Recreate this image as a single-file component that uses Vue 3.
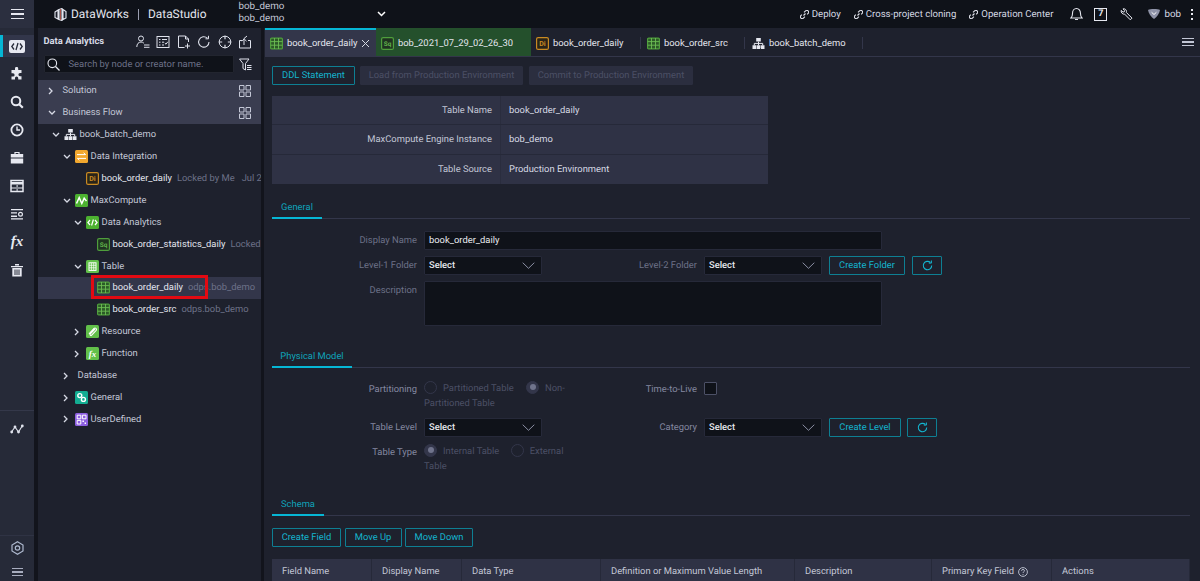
<script setup>
const G = '#4f9e3c'
const icons = {
  di: `<rect x=".6" y=".6" width="11.8" height="11.8" rx="1.5" fill="#2a2418" stroke="#c98a22" stroke-width="1.2"/><text x="6.5" y="9" font-size="7" font-family="Roboto" font-weight="700" text-anchor="middle" fill="#c98a22">Di</text>`,
  sq: `<rect x=".6" y=".6" width="11.8" height="11.8" rx="1.5" fill="#1f3320" stroke="${G}" stroke-width="1.2"/><text x="6.5" y="9" font-size="6.5" font-family="Roboto" font-weight="700" text-anchor="middle" fill="#5fb04a">Sq</text>`,
  table: `<rect x=".6" y="1.1" width="11.8" height="10.8" rx="1" fill="#2c5a28" stroke="${G}" stroke-width="1.2"/><path d="M.6 4.6h11.8M.6 8.2h11.8M4.5 1v11M8.5 1v11" stroke="#6cbc54" stroke-width=".9"/>`,
  flow: `<path d="M4.2 1h4.6v3.6H4.2zM.5 8.3h3.7v3.7H.5zM4.7 8.3h3.6v3.7H4.7zM8.8 8.3h3.7v3.7H8.8z" fill="#e6e8f0"/><path d="M6.5 4.6v3.7M2.3 8.3V6.4h8.4v1.9" stroke="#e6e8f0" fill="none"/>`,
  integ: `<rect width="13" height="13" rx="1.5" fill="#f2a72e"/><path d="M2 4.6h8.6L8.6 2.8M11 8.4H2.4l2 1.8" stroke="#fff" fill="none" stroke-width="1"/>`,
  max: `<rect width="13" height="13" rx="1.5" fill="#4cb130"/><path d="M1.5 9.5 4.2 3.5l2.6 6 2.4-5.4 2.3 3" stroke="#fff" fill="none" stroke-width="1.5"/>`,
  code: `<rect width="13" height="13" rx="1.5" fill="#4cb130"/><path d="M4 4 1.9 6.5 4 9M9 4l2.1 2.5L9 9M7.4 3.5 5.6 9.5" stroke="#fff" fill="none" stroke-width="1.2"/>`,
  tbl: `<rect width="13" height="13" rx="1.5" fill="#62c04a"/><rect x="3" y="2.8" width="7" height="7.6" fill="none" stroke="#fff"/><path d="M3 5.3h7M3 7.8h7M5.4 3v7M7.7 3v7" stroke="#fff" stroke-width=".7"/>`,
  res: `<rect width="13" height="13" rx="1.5" fill="#62c04a"/><path d="M3 9.2 8 3.8a1.5 1.5 0 0 1 2.2 2L5.7 10.6a.9.9 0 0 1-1.4-1.3L9 4.4" stroke="#fff" fill="none" stroke-width="1.1" transform="translate(0 -.4)"/>`,
  fn: `<rect width="13" height="13" rx="1.5" fill="#62c04a"/><text x="6.5" y="9.8" font-size="9" font-family="Liberation Serif" font-style="italic" font-weight="700" text-anchor="middle" fill="#fff">fx</text>`,
  gen: `<rect width="13" height="13" rx="1.5" fill="#13ad92"/><circle cx="4.8" cy="4.6" r="2" fill="none" stroke="#fff" stroke-width="1.4"/><circle cx="8.4" cy="8.4" r="2" fill="none" stroke="#fff" stroke-width="1.4"/>`,
  user: `<rect width="13" height="13" rx="1.5" fill="#8d5fe0"/><path d="M2.2 2.2h3.6v3.6H2.2zM2.2 7.4h3.6V11H2.2zM7.4 2.2H11v3.6H7.4z" fill="none" stroke="#fff"/><path d="M7.4 7.4h1.6V9H7.4zM9.6 9.4H11V11H9.6z" fill="#fff"/>`
}

const railTop = [
  { k: 'puzzle', d: `<path d="M5 1.5a1.6 1.6 0 0 1 3.2 0V3h3.3v3H10a1.6 1.6 0 0 0 0 3.2h1.5v3.3h-3.3V11a1.6 1.6 0 0 0-3.2 0v1.5H1.5V9.5H3a1.6 1.6 0 0 0 0-3.2H1.5V3H5z" fill="#e7e9f1"/>` },
  { k: 'search', d: `<circle cx="6" cy="6" r="4.3" fill="none" stroke="#e7e9f1" stroke-width="2"/><path d="m9.2 9.2 3.6 3.6" stroke="#e7e9f1" stroke-width="2.2"/>` },
  { k: 'clock', d: `<circle cx="7" cy="7" r="5.6" fill="none" stroke="#e7e9f1" stroke-width="1.8"/><path d="M7 3.6V7h3" fill="none" stroke="#e7e9f1" stroke-width="1.4"/>` },
  { k: 'case', d: `<path d="M5 3V1.5h4V3" fill="none" stroke="#e7e9f1" stroke-width="1.2"/><path d="M.8 3h12.4v3.6H.8zM.8 7.6h12.4V12.6H.8z" fill="#e7e9f1"/>` },
  { k: 'tbl', d: `<rect x="1" y="1.5" width="12" height="11" fill="none" stroke="#e7e9f1" stroke-width="1.5"/><path d="M1 3h12v2.400H1zM1 8.600h12v1H1zM6.600 5v7.400h1V5z" fill="#e7e9f1"/>` },
  { k: 'list', d: `<path d="M1 2h12v1.300H1zM1 5.300h6v1.300H1zM1 8.600h6v1.300H1zM1 11.300h12v1.300H1z" fill="#e7e9f1"/><circle cx="10.500" cy="7.300" r="1.900" fill="none" stroke="#e7e9f1" stroke-width="1.200"/>` },
  { k: 'trash', d: `<path d="M1 3h12v1.200H1zM5 1h4v1.500H5z" fill="#e7e9f1"/><path d="M2.300 5h9.400v8.500H2.300z" fill="#e7e9f1"/><path d="M5 6.500v5.500M7 6.500v5.500M9 6.500v5.500" stroke="#262a38" stroke-width="1"/>` }
]
const railA = railTop.slice(0, 6)
const railB = railTop.slice(6)

const tree = [
  { t: 'Solution', lv: 0, c: 'r', sec: 1 },
  { t: 'Business Flow', lv: 0, c: 'd', sec: 1 },
  { t: 'book_batch_demo', lv: 1, c: 'd', i: 'flow' },
  { t: 'Data Integration', lv: 2, c: 'd', i: 'integ' },
  { t: 'book_order_daily', lv: 3, i: 'di', strong: 1, meta: 'Locked by Me', date: 'Jul 29' },
  { t: 'MaxCompute', lv: 2, c: 'd', i: 'max' },
  { t: 'Data Analytics', lv: 3, c: 'd', i: 'code' },
  { t: 'book_order_statistics_daily', lv: 4, i: 'sq', strong: 1, meta: 'Locked' },
  { t: 'Table', lv: 3, c: 'd', i: 'tbl' },
  { t: 'book_order_daily', lv: 4, i: 'table', strong: 1, meta: 'odps.bob_demo', sel: 1 },
  { t: 'book_order_src', lv: 4, i: 'table', strong: 1, meta: 'odps.bob_demo' },
  { t: 'Resource', lv: 3, c: 'r', i: 'res' },
  { t: 'Function', lv: 3, c: 'r', i: 'fn' },
  { t: 'Database', lv: 2, c: 'r' },
  { t: 'General', lv: 2, c: 'r', i: 'gen' },
  { t: 'UserDefined', lv: 2, c: 'r', i: 'user' }
]
const pad = (lv) => (lv === 0 ? 10 : 14 + (lv - 1) * 11)

const tabs = [
  { t: 'book_order_daily', i: 'table', cls: 'active', close: 1 },
  { t: 'bob_2021_07_29_02_26_30', i: 'sq', cls: 'green' },
  { t: 'book_order_daily', i: 'di', cls: 'sep t3' },
  { t: 'book_order_src', i: 'table', cls: 'sep t4' },
  { t: 'book_batch_demo', i: 'flow', cls: 'sep t5' }
]

const info = [
  ['Table Name', 'book_order_daily'],
  ['MaxCompute Engine Instance', 'bob_demo'],
  ['Table Source', 'Production Environment']
]
const cols = [
  ['Field Name', 100], ['Display Name', 90], ['Data Type', 139],
  ['Definition or Maximum Value Length', 194], ['Description', 137],
  ['Primary Key Field', 120], ['Actions', 138]
]
const links = ['Deploy', 'Cross-project cloning', 'Operation Center']
const topIcons = [
  `<circle cx="5" cy="3.500" r="2.500" fill="none" stroke="#dfe2ec" stroke-width="1"/><path d="M.8 12c0-3 1.700-5 4.200-5 1.200 0 2.200.4 2.900 1.200" fill="none" stroke="#dfe2ec"/><path d="M8 10h5.500M8 12.300h5.500" stroke="#dfe2ec"/>`,
  `<rect x="1" y="1.500" width="12" height="11" fill="none" stroke="#dfe2ec"/><path d="M3 4.500h1.500M6 4.500h5M3 7.200h1.500M6 7.200h2M3 10h1.500M6 10h2M8.800 8l1.200 1.200 1.800-2.400" stroke="#dfe2ec" fill="none"/>`,
  `<path d="M7.500 12.500H1.500V1h7l3 3v3" fill="none" stroke="#dfe2ec"/><path d="M8.500 1v3h3M10.500 8.500v5M8 11h5" fill="none" stroke="#dfe2ec"/>`,
  `<path d="M12 7a5.200 5.200 0 1 1-1.600-3.800" fill="none" stroke="#dfe2ec" stroke-width="1.100"/><path d="M11.500.8v3h-3" fill="none" stroke="#dfe2ec"/>`,
  `<circle cx="7" cy="7" r="5.800" fill="none" stroke="#dfe2ec"/><path d="M7 .8v3.400M7 9.800v3.400M.8 7h3.400M9.800 7h3.400" stroke="#dfe2ec" stroke-width="1.200"/>`,
  `<path d="M4 5.500H1.500v7.500h11V5.500H10" fill="none" stroke="#dfe2ec"/><path d="M9 1 6 3.500V10M6 4 4 6.200M6.300 4 8.500 6.200" fill="none" stroke="#dfe2ec"/>`
]
</script>

<template>
  <div class="app">
    <aside class="rail">
      <div class="burger"><span></span><span></span><span></span></div>
      <div class="rail-active">
        <svg width="16" height="13" viewBox="0 0 16 13"><rect width="16" height="13" rx="2" fill="#e7e9f1"/><path d="M5 3.500 2.800 6.500 5 9.500M11 3.500l2.200 3L11 9.500M9 3l-2 7" fill="none" stroke="#262a38" stroke-width="1.300"/></svg>
      </div>
      <div class="rail-list">
        <div v-for="r in railA" :key="r.k" class="rail-item">
          <svg width="14" height="14" viewBox="0 0 14 14" v-html="r.d"></svg>
        </div>
        <div class="rail-item fx">fx</div>
        <div v-for="r in railB" :key="r.k" class="rail-item">
          <svg width="14" height="14" viewBox="0 0 14 14" v-html="r.d"></svg>
        </div>
      </div>
      <div class="rail-div"></div>
      <div class="rail-graph">
        <svg width="14" height="12" viewBox="0 0 14 12"><path d="M1.500 9 5 4l3.500 5L12.500 2.500" fill="none" stroke="#dfe2ec" stroke-width="1.100"/><circle cx="1.700" cy="9" r="1.400" fill="#dfe2ec"/><circle cx="5" cy="4" r="1.400" fill="#dfe2ec"/><circle cx="8.500" cy="9" r="1.400" fill="#dfe2ec"/><circle cx="12.300" cy="3" r="1.400" fill="#dfe2ec"/></svg>
      </div>
      <div class="rail-spacer"></div>
      <div class="rail-div2"></div>
      <div class="rail-gear">
        <svg width="13" height="14" viewBox="0 0 13 14"><path d="M6.500.8 12 4v6l-5.500 3.200L1 10V4z" fill="none" stroke="#aeb9cf" stroke-width="1.200"/><circle cx="6.500" cy="7" r="2.200" fill="none" stroke="#aeb9cf" stroke-width="1.200"/></svg>
      </div>
      <div class="burger small"><span></span><span></span><span></span></div>
    </aside>

    <div class="right">
      <header class="top">
        <svg class="logo" width="13" height="13" viewBox="0 0 13 13"><path d="M1 4 4 2v9L1 9.500zM5 1.500l3-1v12l-3-1zM9 1.500l3 2V10l-3 1.500z" fill="#1c1f2a" stroke="#e3e5ee" stroke-width="1.100"/><path d="M6.500 1v11" stroke="#c95a4a" stroke-width=".8"/></svg>
        <span class="brand">DataWorks</span>
        <span class="bar"></span>
        <span class="brand">DataStudio</span>
        <div class="proj"><div>bob_demo</div><div>bob_demo</div></div>
        <svg class="proj-chev" width="9" height="6" viewBox="0 0 9 6"><path d="m1 1 3.500 3.500L8 1" fill="none" stroke="#fff" stroke-width="1.500"/></svg>
        <div class="grow"></div>
        <a v-for="l in links" :key="l" class="link">
          <svg width="9" height="9" viewBox="0 0 9 9"><path d="M3.500 5.500 5.500 3.500M1.800 4.700.9 5.600a1.700 1.700 0 0 0 2.500 2.500l1.500-1.500M4 2.400l1.600-1.500A1.700 1.700 0 0 1 8.100 3.400L7.200 4.300" fill="none" stroke="#e3e5ee" stroke-width="1.100"/></svg>
          {{ l }}
        </a>
        <svg class="ti bell" width="13" height="14" viewBox="0 0 13 14"><path d="M1 11h11c-1.200-1-1.500-2-1.500-4.500 0-3-1.700-5-4-5s-4 2-4 5C2.500 9 2.200 10 1 11zM5 12.500h3" fill="none" stroke="#e6e8f0" stroke-width="1.100"/></svg>
        <div class="help">7</div>
        <svg class="ti wrench" width="13" height="13" viewBox="0 0 13 13"><path d="M1.200 2.400 3 4.100l1.300-.3.300-1.300L3 .9c1.600-.5 3.500.7 3.500 2.500 0 .4 0 .8-.2 1l5.700 5.700-1.700 1.700-5.700-5.700C2.800 6.600.6 4.600 1.200 2.400z" fill="none" stroke="#e6e8f0" stroke-width="1"/></svg>
        <svg class="ti shield" width="12" height="10" viewBox="0 0 12 10"><path d="M0 1c2-1.300 10-1.300 12 0-.5 3.500-3 7-6 9C3 8 .5 4.500 0 1z" fill="#8f93a8"/><path d="m3.600 3.300 2.400 2.200 2.400-2.200" fill="none" stroke="#fff"/></svg>
        <span class="user">bob</span>
        <div class="kebab"><i></i><i></i><i></i></div>
      </header>

      <div class="body">
        <section class="side">
          <div class="side-head">
            <span class="side-title">Data Analytics</span>
            <div class="side-tools">
              <svg v-for="(d, i) in topIcons" :key="i" width="14" height="14" viewBox="0 0 14 14" v-html="d"></svg>
            </div>
          </div>
          <div class="search-row">
            <div class="search">
              <svg width="13" height="13" viewBox="0 0 13 13"><circle cx="5.300" cy="5.300" r="4.300" fill="none" stroke="#e6e8f0" stroke-width="1.100"/><path d="m8.500 8.500 4 4" stroke="#e6e8f0" stroke-width="1.300"/></svg>
              <span>Search by node or creator name.</span>
            </div>
            <svg width="13" height="13" viewBox="0 0 13 13"><path d="M.5 1h9.500L6.500 5.500V12L4 10.500v-5z" fill="none" stroke="#dfe2ec"/><path d="M8 7.500h4.500M8 9.500h4.500M8 11.500h4.500" stroke="#dfe2ec"/></svg>
          </div>
          <div class="tree">
            <div v-for="n in tree" :key="n.t + n.lv" class="row" :class="{ sec: n.sec, sel: n.sel }" :style="{ paddingLeft: pad(n.lv) + 'px' }">
              <span class="caret">
                <svg v-if="n.c === 'r'" width="5" height="8" viewBox="0 0 5 8"><path d="m1 1 3 3-3 3" fill="none" stroke="#d6d9e4" stroke-width="1.300"/></svg>
                <svg v-else-if="n.c === 'd'" width="8" height="5" viewBox="0 0 8 5"><path d="m1 1 3 3 3-3" fill="none" stroke="#d6d9e4" stroke-width="1.300"/></svg>
              </span>
              <svg v-if="n.i" class="node-ic" width="13" height="13" viewBox="0 0 13 13" v-html="icons[n.i]"></svg>
              <span class="name" :class="{ strong: n.strong, noic: !n.i }">{{ n.t }}</span>
              <span v-if="n.meta" class="meta">{{ n.meta }}</span>
              <span v-if="n.date" class="meta date">{{ n.date }}</span>
              <svg v-if="n.sec" class="grid-ic" width="12" height="12" viewBox="0 0 12 12"><path d="M.5.500h4.500v4.500H.5zM7 .5h4.500v4.500H7zM.5 7h4.500v4.500H.5zM7 7h4.500v4.500H7z" fill="none" stroke="#c3c7d6"/></svg>
              <span v-if="n.sel" class="redbox"></span>
            </div>
          </div>
        </section>

        <main class="main">
          <div class="tabbar">
            <div v-for="(t, i) in tabs" :key="i" class="tab" :class="t.cls">
              <svg class="tab-ic" width="13" height="13" viewBox="0 0 13 13" v-html="icons[t.i]"></svg>
              <span>{{ t.t }}</span>
              <svg v-if="t.close" class="x" width="9" height="9" viewBox="0 0 9 9"><path d="m1 1 7 7M8 1 1 8" stroke="#d6d9e4" stroke-width="1"/></svg>
            </div>
            <div class="grow"></div>
            <div class="tab-menu"><span></span><span></span><span></span></div>
          </div>

          <div class="content">
            <div class="btns">
              <button class="btn ddl">DDL Statement</button>
              <button class="btn dis load">Load from Production Environment</button>
              <button class="btn dis commit">Commit to Production Environment</button>
            </div>

            <div class="info">
              <div v-for="r in info" :key="r[0]" class="info-row">
                <div class="info-l">{{ r[0] }}</div>
                <div class="info-v">{{ r[1] }}</div>
              </div>
            </div>

            <div class="sect s1"><span class="sect-t w50">General</span></div>
            <div class="form f1">
              <div class="frow">
                <label class="lbl">Display Name</label>
                <div class="field wide val">book_order_daily</div>
              </div>
              <div class="frow">
                <label class="lbl">Level-1 Folder</label>
                <div class="field sel-f"><span>Select</span><svg width="13" height="7" viewBox="0 0 13 7"><path d="m.7.700 5.800 5.600L12.300.7" fill="none" stroke="#8a8ea3"/></svg></div>
                <label class="lbl l2">Level-2 Folder</label>
                <div class="field sel-f"><span>Select</span><svg width="13" height="7" viewBox="0 0 13 7"><path d="m.7.700 5.800 5.600L12.300.7" fill="none" stroke="#8a8ea3"/></svg></div>
                <button class="btn cf">Create Folder</button>
                <button class="btn rf"><svg width="11" height="11" viewBox="0 0 11 11"><path d="M9.700 5.500a4.200 4.200 0 1 1-1.300-3" fill="none" stroke="#14b5cf" stroke-width="1.100"/><path d="M9.400.500v2.600H6.800" fill="none" stroke="#14b5cf"/></svg></button>
              </div>
              <div class="frow">
                <label class="lbl">Description</label>
                <div class="field wide area"></div>
              </div>
            </div>

            <div class="sect s2"><span class="sect-t w80">Physical Model</span></div>
            <div class="form f2">
              <div class="frow">
                <label class="lbl lmid">Partitioning</label>
                <div class="radios"><i class="radio"></i>Partitioned Table <i class="radio on r2"></i>Non-Partitioned Table</div>
                <label class="lbl l3 lmid">Time-to-Live</label>
                <i class="check"></i>
              </div>
              <div class="frow">
                <label class="lbl">Table Level</label>
                <div class="field sel-f"><span>Select</span><svg width="13" height="7" viewBox="0 0 13 7"><path d="m.7.700 5.800 5.600L12.300.7" fill="none" stroke="#8a8ea3"/></svg></div>
                <label class="lbl l2">Category</label>
                <div class="field sel-f"><span>Select</span><svg width="13" height="7" viewBox="0 0 13 7"><path d="m.7.700 5.800 5.600L12.300.7" fill="none" stroke="#8a8ea3"/></svg></div>
                <button class="btn cl">Create Level</button>
                <button class="btn rf rf2"><svg width="11" height="11" viewBox="0 0 11 11"><path d="M9.700 5.500a4.200 4.200 0 1 1-1.300-3" fill="none" stroke="#14b5cf" stroke-width="1.100"/><path d="M9.400.500v2.600H6.800" fill="none" stroke="#14b5cf"/></svg></button>
              </div>
              <div class="frow">
                <label class="lbl lmid">Table Type</label>
                <div class="radios"><i class="radio on"></i>Internal Table <i class="radio r3"></i>External Table</div>
              </div>
            </div>

            <div class="sect s3"><span class="sect-t w52">Schema</span></div>
            <div class="btns b3">
              <button class="btn b-cf">Create Field</button>
              <button class="btn b-mu">Move Up</button>
              <button class="btn b-md">Move Down</button>
            </div>
            <div class="thead">
              <div v-for="c in cols" :key="c[0]" class="th" :style="{ width: c[1] + 'px' }">
                {{ c[0] }}
                <svg v-if="c[0].startsWith('Primary')" width="10" height="10" viewBox="0 0 10 10"><circle cx="5" cy="5" r="4.400" fill="none" stroke="#c3c7d6" stroke-width=".9"/><path d="M3.500 3.800c0-1.800 3-1.800 3 0 0 1-1.500 1-1.500 2.200M5 7v.9" fill="none" stroke="#c3c7d6" stroke-width=".9"/></svg>
              </div>
            </div>
          </div>
        </main>
      </div>
    </div>
  </div>
</template>

<style>
html, body { margin: 0; background: #12141c; overflow: hidden; }
</style>

<style scoped>
.app { width: 1200px; height: 581px; display: flex; overflow: hidden; font-family: Roboto, "Liberation Sans", sans-serif; font-size: 9.400px; text-rendering: geometricPrecision; color: #c3c7d6; background: #12141c; }
.grow { flex: 1; }

.rail { width: 34px; flex: none; background: #262a38; display: flex; flex-direction: column; }
.burger { height: 28px; background: #2b2f3f; display: flex; flex-direction: column; align-items: center; justify-content: center; gap: 3px; }
.burger span { width: 13px; height: 1.600px; background: #e6e8f0; }
.burger.small { height: 18px; background: none; gap: 2.500px; }
.burger.small span { width: 11px; height: 1.300px; background: #a8adbf; }
.rail-active { margin-top: 7px; height: 22px; background: #32364a; border-left: 3px solid #06b6d4; display: flex; align-items: center; justify-content: center; padding-right: 3px; }
.rail-list { margin-top: 3px; display: flex; flex-direction: column; }
.rail-item { height: 28px; display: flex; align-items: center; justify-content: center; color: #e7e9f1; }
.fx { font-family: "Liberation Serif", serif; font-style: italic; font-weight: 700; font-size: 15px; }
.rail-div { margin-top: 126px; border-top: 1px solid #34384a; }
.rail-graph { height: 35px; display: flex; align-items: center; justify-content: center; }
.rail-spacer { flex: 1; }
.rail-div2 { border-top: 1px solid #2f3344; }
.rail-gear { height: 27px; box-sizing: border-box; padding-bottom: 3px; display: flex; align-items: center; justify-content: center; }

.right { flex: 1; min-width: 0; display: flex; flex-direction: column; }
.top { height: 28px; flex: none; background: #0f1219; display: flex; align-items: center; padding-right: 7px; }
.logo { margin-left: 20px; flex: none; }
.brand { font-size: 11.900px; color: #e3e5ee; margin-left: 4px; }
.bar { width: 1px; height: 11px; background: #9a9eb0; margin: 0 5px 0 9px; }
.proj { margin-left: 32px; margin-top: -2px; font-size: 9.800px; line-height: 12px; color: #c3c7d6; width: 138px; flex: none; }
.link { display: flex; align-items: center; gap: 3px; font-size: 9.600px; color: #d6d9e4; margin-right: 13px; }
.ti { flex: none; }
.bell { margin-left: 4px; }
.help { width: 11px; height: 11px; border: 1px solid #e6e8f0; margin-left: 11px; font-size: 9px; font-weight: 700; line-height: 11px; text-align: center; color: #e6e8f0; flex: none; }
.wrench { margin-left: 13px; }
.shield { margin-left: 15px; }
.user { margin-left: 4px; font-size: 9.800px; color: #d6d9e4; }
.kebab { margin-left: 10px; display: flex; flex-direction: column; gap: 2.500px; }
.kebab i { width: 2px; height: 2px; background: #e6e8f0; }

.body { flex: 1; min-height: 0; display: flex; padding-left: 3.500px; gap: 3px; }
.side { width: 223.500px; flex: none; background: #1e212d; position: relative; overflow: hidden; }
.side-head { height: 27px; display: flex; align-items: center; padding-left: 6px; }
.side-title { font-weight: 700; font-size: 9.400px; color: #d6d9e4; width: 92px; flex: none; }
.side-tools { display: flex; gap: 6.500px; }
.search-row { display: flex; align-items: center; gap: 5px; padding-left: 6px; }
.search { width: 190px; height: 18px; box-sizing: border-box; background: #0f1219; border: 1px solid #22252f; display: flex; align-items: center; padding-left: 2px; gap: 9px; border-radius: 1px; }
.search span { color: #6d7188; font-size: 9.400px; }
.tree { margin-top: 6.700px; }
.row { height: 21.930px; box-sizing: border-box; display: flex; align-items: center; position: relative; white-space: nowrap; }
.sec { background: #3a3d50; }
.sel { background: #33364a; }
.caret { width: 12px; flex: none; display: flex; align-items: center; }
.node-ic { flex: none; margin-right: 3px; }
.name { color: #c3c7d6; flex: none; }
.name.noic { margin-left: 3px; }
.name.strong { color: #e3e5ee; }
.meta { margin-left: 5px; color: #6d7188; flex: none; }
.date { margin-left: 7px; }
.grid-ic { position: absolute; left: 201px; top: 5px; }
.redbox { position: absolute; left: 53.500px; top: -2px; width: 117px; height: 24px; box-sizing: border-box; border: 3px solid #e20a12; pointer-events: none; }

.main { flex: 1; min-width: 0; background: #1e212d; display: flex; flex-direction: column; }
.tabbar { height: 29px; flex: none; display: flex; align-items: stretch; border-bottom: 1px solid #33364a; box-sizing: border-box; margin-left: 1px; }
.tab { display: flex; align-items: center; gap: 4px; padding: 0 0 0 5px; color: #e3e5ee; border-top: 2px solid transparent; box-sizing: border-box; position: relative; flex: none; }
.tab-ic { flex: none; }
.tab.active { width: 111px; background: #33364a; border-top-color: #06b6d4; }
.tab.green { width: 155px; background: #24502c; }
.tab.t3 { width: 110px; }
.tab.t4 { width: 104px; padding-left: 6px; }
.tab.t5 { width: 118px; padding-left: 7px; }
.tab.sep::after { content: ""; position: absolute; right: 0; top: 7px; bottom: 7px; width: 1px; background: #33364a; }
.x { margin-left: 0; flex: none; }
.tab-menu { width: 12px; margin-right: 6px; display: flex; flex-direction: column; justify-content: center; gap: 2.500px; }
.tab-menu span { height: 1.300px; background: #c3c7d6; }

.content { padding: 9px 10px 0 8px; }
.btns { display: flex; }
.btn { height: 19px; box-sizing: border-box; padding: 0; background: transparent; border: 1px solid #0e7f93; border-radius: 1px; color: #14b5cf; font: 9.400px Roboto, sans-serif; text-rendering: geometricPrecision; flex: none; }
.ddl { width: 83px; }
.dis { background: #2b2e3f; border-color: #2b2e3f; color: #4c5066; }
.load { width: 163px; margin-left: 5px; }
.commit { width: 164px; margin-left: 6px; }

.info { margin-top: 11px; width: 496px; background: #2f3245; }
.info-row { height: 29.300px; display: flex; align-items: stretch; border-bottom: 1px solid #262939; box-sizing: border-box; }
.info-row:last-child { border-bottom: 0; }
.info-l { width: 229px; display: flex; align-items: center; justify-content: flex-end; box-sizing: border-box; padding-right: 8px; border-right: 1px solid #2a2d3e; }
.info-v { padding-left: 8px; color: #d6d9e4; display: flex; align-items: center; }

.sect { height: 22px; box-sizing: border-box; border-bottom: 1px solid #33364a; display: flex; align-items: flex-end; position: relative; }
.sect-t { display: block; text-align: center; height: 22px; box-sizing: border-box; padding-top: 4px; line-height: 13px; color: #0fa3ba; border-bottom: 2px solid #06b6d4; margin-bottom: -1px; }
.w50 { width: 50px; } .w80 { width: 80px; } .w52 { width: 52px; }
.s1 { margin-top: 13px; } .s2 { margin-top: 20px; } .s3 { margin-top: 20px; }

.form { display: flex; flex-direction: column; }
.f1 { margin-top: 12px; gap: 6px; }
.f2 { margin-top: 13px; gap: 7px; }
.frow { display: flex; align-items: flex-start; }
.lbl { width: 145px; margin-right: 7px; flex: none; text-align: right; line-height: 19px; color: #6d7188; }
.f2 .lbl { color: #8488a0; }
.l2 { width: 155px; }
.l3 { width: 123px; }
.lmid { line-height: 17px; }
.field { height: 19px; box-sizing: border-box; background: #0f1219; border: 1px solid #262939; flex: none; border-radius: 1px; }
.wide { width: 458px; }
.val { color: #e8eaf0; line-height: 17px; padding-left: 4px; }
.area { height: 45px; }
.sel-f { width: 118px; display: flex; align-items: center; justify-content: space-between; padding: 0 6px 0 4px; color: #e8eaf0; font-weight: 500; }
.cf { width: 76px; margin-left: 7px; }
.cl { width: 72px; margin-left: 7px; }
.rf { width: 30px; margin-left: 7px; display: flex; align-items: center; justify-content: center; }
.rf2 { margin-left: 6px; }
.radios { width: 150px; flex: none; line-height: 15px; color: #4c5066; }
.radio { display: inline-block; width: 11px; height: 11px; border: 1px solid #33364a; border-radius: 50%; vertical-align: -3px; margin-right: 6px; position: relative; box-sizing: content-box; }
.radio.on { background: #33364a; }
.radio.on::after { content: ""; position: absolute; left: 2.500px; top: 2.500px; width: 6px; height: 6px; border-radius: 50%; background: #70748c; }
.r2 { margin-left: 10px; }
.r3 { margin-left: 9px; }
.check { width: 11px; height: 11px; border: 1px solid #4c5066; background: #0f1219; border-radius: 1px; margin-top: 1px; flex: none; }

.b3 { margin-top: 12px; gap: 3.500px; }
.b-cf { width: 69px; } .b-mu { width: 57px; } .b-md { width: 68px; }
.thead { margin-top: 12px; width: 918px; height: 26px; display: flex; background: #2f3245; }
.th { box-sizing: border-box; padding: 7px 0 0 10px; border-right: 1px solid #262939; display: flex; gap: 4px; align-items: flex-start; line-height: 12px; flex: none; }
.th svg { margin-top: 1px; }
</style>
